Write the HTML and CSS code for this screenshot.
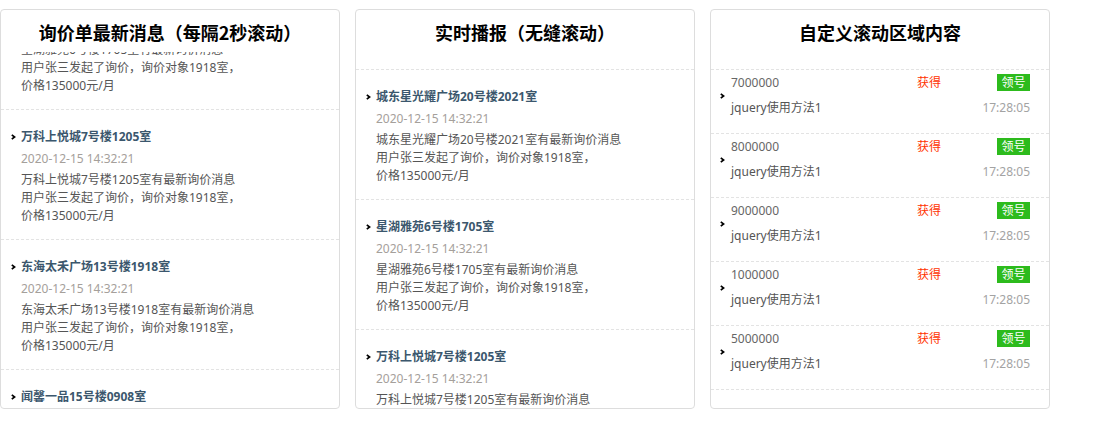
FILE: index.html
```html
<!DOCTYPE html>
<html lang="zh-CN">
<head>
<meta charset="utf-8">
<title>滚动示例</title>
<link rel="stylesheet" href="styles.css">
</head>
<body>
<div class="boards">
  <section class="panel">
    <h3 class="panel-title">询价单最新消息（每隔2秒滚动）</h3>
    <div class="viewport">
      <ul class="news news-step">
        <li class="news-item">
          <p class="news-name">星湖雅苑6号楼1705室</p>
          <p class="news-date">2020-12-15 14:32:21</p>
          <p class="news-desc">星湖雅苑6号楼1705室有最新询价消息<br>用户张三发起了询价，询价对象1918室，<br>价格135000元/月</p>
        </li>
        <li class="news-item">
          <p class="news-name">万科上悦城7号楼1205室</p>
          <p class="news-date">2020-12-15 14:32:21</p>
          <p class="news-desc">万科上悦城7号楼1205室有最新询价消息<br>用户张三发起了询价，询价对象1918室，<br>价格135000元/月</p>
        </li>
        <li class="news-item">
          <p class="news-name">东海太禾广场13号楼1918室</p>
          <p class="news-date">2020-12-15 14:32:21</p>
          <p class="news-desc">东海太禾广场13号楼1918室有最新询价消息<br>用户张三发起了询价，询价对象1918室，<br>价格135000元/月</p>
        </li>
        <li class="news-item">
          <p class="news-name">闻馨一品15号楼0908室</p>
          <p class="news-date">2020-12-15 14:32:21</p>
          <p class="news-desc">闻馨一品15号楼0908室有最新询价消息<br>用户张三发起了询价，询价对象1918室，<br>价格135000元/月</p>
        </li>
      </ul>
    </div>
  </section>

  <section class="panel">
    <h3 class="panel-title">实时播报（无缝滚动）</h3>
    <div class="viewport">
      <ul class="news news-seamless">
        <li class="news-item">
          <p class="news-name">城东星光耀广场20号楼2021室</p>
          <p class="news-date">2020-12-15 14:32:21</p>
          <p class="news-desc">城东星光耀广场20号楼2021室有最新询价消息<br>用户张三发起了询价，询价对象1918室，<br>价格135000元/月</p>
        </li>
        <li class="news-item">
          <p class="news-name">星湖雅苑6号楼1705室</p>
          <p class="news-date">2020-12-15 14:32:21</p>
          <p class="news-desc">星湖雅苑6号楼1705室有最新询价消息<br>用户张三发起了询价，询价对象1918室，<br>价格135000元/月</p>
        </li>
        <li class="news-item">
          <p class="news-name">万科上悦城7号楼1205室</p>
          <p class="news-date">2020-12-15 14:32:21</p>
          <p class="news-desc">万科上悦城7号楼1205室有最新询价消息<br>用户张三发起了询价，询价对象1918室，<br>价格135000元/月</p>
        </li>
      </ul>
    </div>
  </section>

  <section class="panel">
    <h3 class="panel-title">自定义滚动区域内容</h3>
    <div class="viewport">
      <ul class="rows">
        <li class="row">
          <div class="row-top"><span class="row-num">7000000</span><span class="row-get">获得</span><span class="row-badge">领号</span></div>
          <div class="row-bottom"><span class="row-name">jquery使用方法1</span><span class="row-time">17:28:05</span></div>
        </li>
        <li class="row">
          <div class="row-top"><span class="row-num">8000000</span><span class="row-get">获得</span><span class="row-badge">领号</span></div>
          <div class="row-bottom"><span class="row-name">jquery使用方法1</span><span class="row-time">17:28:05</span></div>
        </li>
        <li class="row">
          <div class="row-top"><span class="row-num">9000000</span><span class="row-get">获得</span><span class="row-badge">领号</span></div>
          <div class="row-bottom"><span class="row-name">jquery使用方法1</span><span class="row-time">17:28:05</span></div>
        </li>
        <li class="row">
          <div class="row-top"><span class="row-num">1000000</span><span class="row-get">获得</span><span class="row-badge">领号</span></div>
          <div class="row-bottom"><span class="row-name">jquery使用方法1</span><span class="row-time">17:28:05</span></div>
        </li>
        <li class="row">
          <div class="row-top"><span class="row-num">5000000</span><span class="row-get">获得</span><span class="row-badge">领号</span></div>
          <div class="row-bottom"><span class="row-name">jquery使用方法1</span><span class="row-time">17:28:05</span></div>
        </li>
      </ul>
    </div>
  </section>
</div>
</body>
</html>
```

FILE: styles.css
```css
* { box-sizing: border-box; }

body {
  margin: 0;
  background: #fff;
  font-family: "Noto Sans", "Noto Sans CJK SC", sans-serif;
  font-size: 12px;
  color: #555;
}

ul, p { margin: 0; padding: 0; list-style: none; }

.boards {
  display: flex;
  gap: 15px;
  padding-top: 9px;
}

.panel {
  width: 340px;
  height: 400px;
  border: 1px solid #ddd;
  border-radius: 4px;
  display: flex;
  flex-direction: column;
  overflow: hidden;
}

.panel-title {
  margin: 0;
  height: 42px;
  padding-top: 2px;
  line-height: 40px;
  text-align: center;
  font-family: "Noto Sans CJK SC", sans-serif;
  font-size: 18px;
  font-weight: bold;
  color: #000;
  flex: none;
}

.viewport {
  flex: 1;
  overflow: hidden;
}

/* scroll states */
.news-step { margin-top: -72px; }
.news-seamless { margin-top: 17px; border-top: 1px dashed #e3e3e3; }
.rows { margin-top: 17px; border-top: 1px dashed #e3e3e3; }

.news-item {
  height: 130px;
  padding: 17px 20px 0 20px;
  border-bottom: 1px dashed #e3e3e3;
  background: url("data:image/svg+xml,%3Csvg xmlns='http://www.w3.org/2000/svg' width='5' height='6' viewBox='0 0 5 6'%3E%3Cpolyline points='0.8,0.8 3.6,3 0.8,5.2' fill='none' stroke='%23000' stroke-width='1.7'/%3E%3C/svg%3E") no-repeat 10px 24px;
}

.news-name {
  line-height: 20px;
  font-weight: bold;
  color: #3b576d;
}

.news-date {
  line-height: 24px;
  color: #a5a09b;
}

.news-desc {
  line-height: 18px;
  color: #555;
}

.row {
  height: 64px;
  padding: 1px 19px 0 20px;
  border-bottom: 1px dashed #e3e3e3;
  background: url("data:image/svg+xml,%3Csvg xmlns='http://www.w3.org/2000/svg' width='5' height='6' viewBox='0 0 5 6'%3E%3Cpolyline points='0.8,0.8 3.6,3 0.8,5.2' fill='none' stroke='%23000' stroke-width='1.7'/%3E%3C/svg%3E") no-repeat 9px 23px;
}

.row-top {
  display: flex;
  align-items: center;
  height: 22px;
}

.row-num { flex: 1; color: #666; }

.row-get {
  width: 80px;
  color: #ff3300;
}

.row-badge {
  width: 33px;
  height: 17px;
  line-height: 17px;
  text-align: center;
  background: #2dbb1d;
  color: #fff;
  font-size: 12px;
}

.row-bottom {
  display: flex;
  justify-content: space-between;
  align-items: center;
  margin-top: 2px;
  height: 24px;
}

.row-name { color: #555; }
.row-time { color: #a3a3a3; }
```
